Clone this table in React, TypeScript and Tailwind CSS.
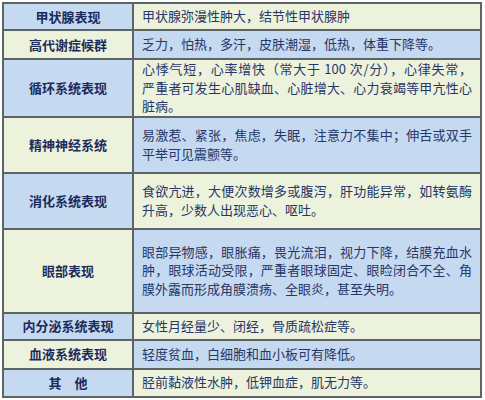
import type { ReactNode } from "react";

const rows: { label: string; text: ReactNode; h: string }[] = [
  { label: "甲状腺表现", text: "甲状腺弥漫性肿大，结节性甲状腺肿", h: "h-[27px]" },
  { label: "高代谢症候群", text: "乏力，怕热，多汗，皮肤潮湿，低热，体重下降等。", h: "h-[29px]" },
  {
    label: "循环系统表现",
    text: (
      <>
        <span className="block [text-align-last:justify]">心悸气短，心率增快（常大于 100 次/分），心律失常，</span>
        严重者可发生心肌缺血、心脏增大、心力衰竭等甲亢性心脏病。
      </>
    ),
    h: "h-[56px]",
  },
  { label: "精神神经系统", text: "易激惹、紧张，焦虑，失眠，注意力不集中；伸舌或双手平举可见震颤等。", h: "h-[56px]" },
  { label: "消化系统表现", text: "食欲亢进，大便次数增多或腹泻，肝功能异常，如转氨酶升高，少数人出现恶心、呕吐。", h: "h-[56px]" },
  {
    label: "眼部表现",
    text: "眼部异物感，眼胀痛，畏光流泪，视力下降，结膜充血水肿，眼球活动受限，严重者眼球固定、眼睑闭合不全、角膜外露而形成角膜溃疡、全眼炎，甚至失明。",
    h: "h-[84px]",
  },
  { label: "内分泌系统表现", text: "女性月经量少、闭经，骨质疏松症等。", h: "h-[27px]" },
  { label: "血液系统表现", text: "轻度贫血，白细胞和血小板可有降低。", h: "h-[29px]" },
  { label: "其　他", text: "胫前黏液性水肿，低钾血症，肌无力等。", h: "h-[28px]" },
];

export default function App() {
  return (
    <div className="w-[485px] h-[400px] bg-white pt-[2px] pl-[2px] font-['Noto_Sans_CJK_SC',sans-serif]">
      <table className="w-[480px] table-fixed border-collapse border-2 border-[#5d6465]">
        <colgroup>
          <col className="w-[130px]" />
          <col />
        </colgroup>
        <tbody>
          {rows.map((r, i) => {
            const blueLeft = i % 2 === 0;
            return (
              <tr key={r.label} className={r.h}>
                <td
                  className={`border-2 border-[#5d6465] p-0 text-center font-bold text-[13px] leading-[18px] text-[#1d2b5c] ${
                    blueLeft ? "bg-[#c5d9f0]" : "bg-[#edf2dc]"
                  }`}
                >
                  {r.label}
                </td>
                <td
                  className={`border-2 border-[#5d6465] px-2 py-0 text-[13px] leading-[18.5px] text-justify text-[#263668] ${
                    blueLeft ? "bg-[#edf2dc]" : "bg-[#c5d9f0]"
                  }`}
                >
                  {r.text}
                </td>
              </tr>
            );
          })}
        </tbody>
      </table>
    </div>
  );
}
